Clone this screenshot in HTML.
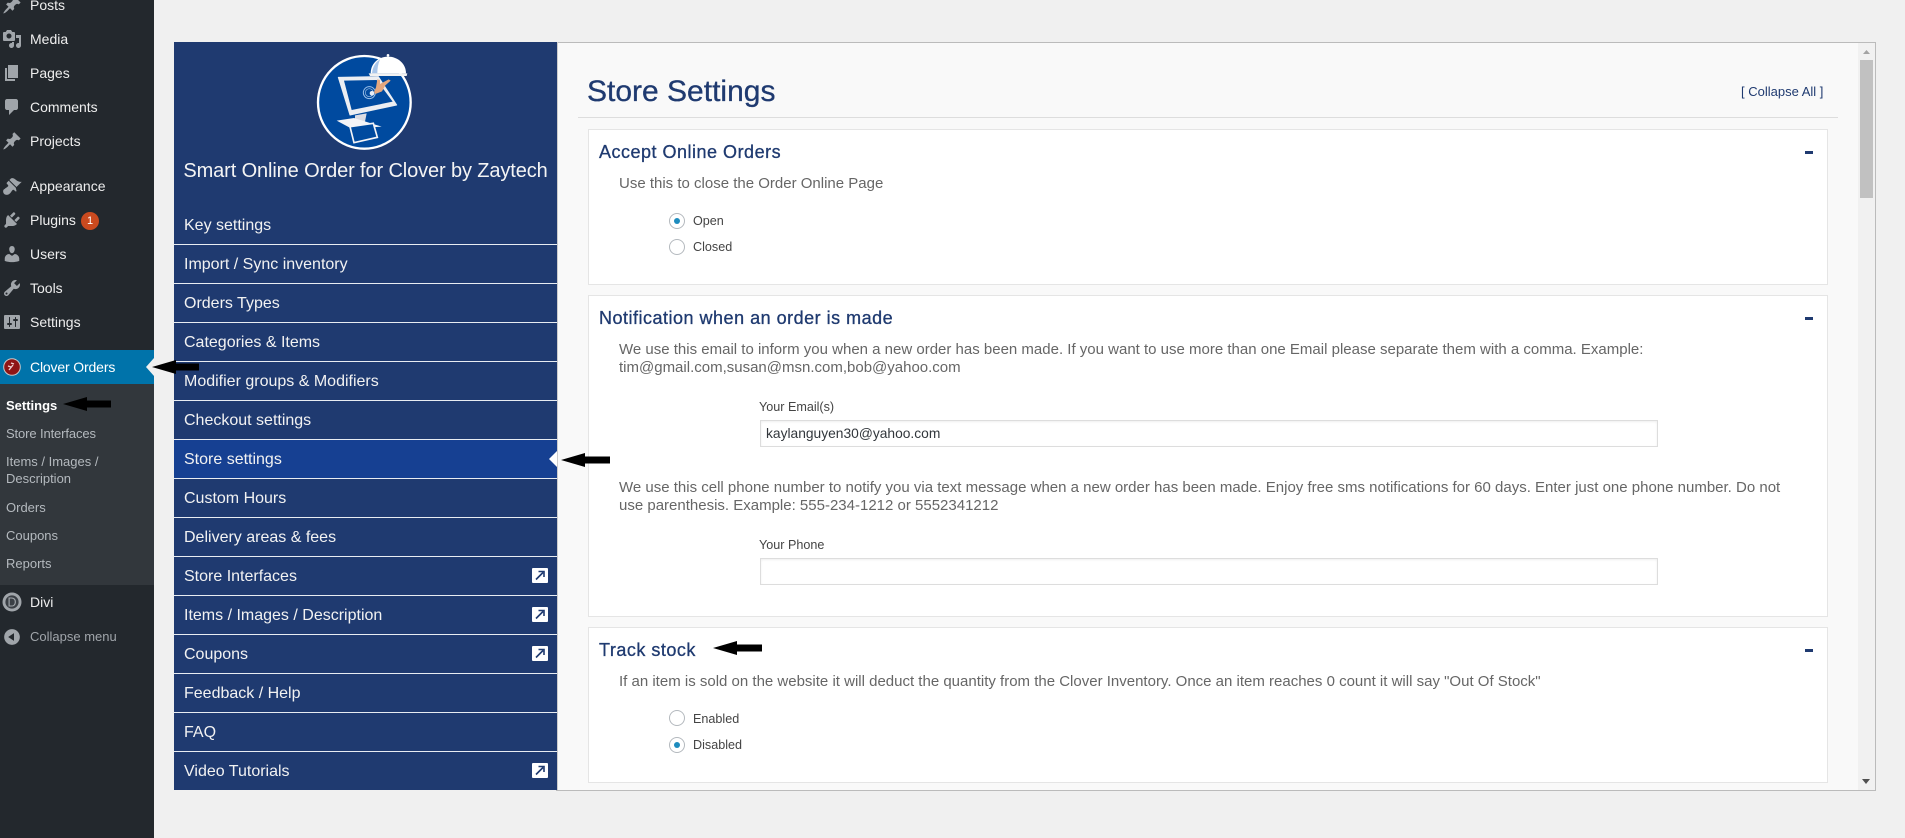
<!DOCTYPE html>
<html><head><meta charset="utf-8"><title>Store Settings</title>
<style>
*{box-sizing:border-box}
html,body{margin:0;padding:0;width:1905px;height:838px;overflow:hidden;background:#f0f0f0;font-family:"Liberation Sans",sans-serif}
.a{position:absolute;white-space:nowrap}
#side{position:absolute;left:0;top:0;width:154px;height:838px;background:#23282d}
.m{position:absolute;left:30px;color:#eee;font-size:14px;line-height:20px;white-space:nowrap}
.i{position:absolute;left:2px;width:20px;height:20px;fill:#a0a5aa}
.s{position:absolute;left:6px;color:#b4b9be;font-size:13px;line-height:18px;white-space:nowrap}
.row{position:absolute;left:174px;width:383px;height:39px;background:#1f3a70;border-bottom:1px solid #e8ecf2;color:#f2f2f2;font-size:16px;line-height:40px;padding-left:10px;white-space:nowrap}
.ext{position:absolute;left:358px;top:11px;width:16px;height:15px}
.card{position:absolute;left:588px;width:1240px;background:#fff;border:1px solid #e5e5e5}
.h{position:absolute;left:599px;color:#1f3a70;font-size:18px;letter-spacing:.5px;line-height:24px;white-space:nowrap;font-weight:400;-webkit-text-stroke:.3px #1f3a70}
.p{position:absolute;left:619px;color:#666;font-size:15px;line-height:18px;white-space:nowrap}
.l{position:absolute;color:#444;font-size:12.6px;line-height:16px;white-space:nowrap}
.dash{position:absolute;left:1805px;width:8px;height:3px;background:#1f3a70}
.r{position:absolute;left:669px;width:16px;height:16px;border:1px solid #b4b9be;border-radius:50%;background:#fff}
.r.on:after{content:"";position:absolute;left:4px;top:4px;width:6px;height:6px;border-radius:50%;background:#1e8cbe}
.inp{position:absolute;left:760px;width:898px;height:27px;background:#fff;border:1px solid #ddd;box-shadow:inset 0 1px 2px rgba(0,0,0,.07);color:#32373c;font-size:13.8px;line-height:25px;padding-left:5px;white-space:nowrap}
</style></head><body>

<div id="side">
<svg class="i" style="top:-5px" viewBox="0 0 20 20"><path d="M10.44 3.02l1.82-1.82 6.36 6.35-1.83 1.82c-1.05-.68-2.48-.57-3.41.36l-.75.75c-.92.93-1.04 2.35-.35 3.41l-1.83 1.82-2.41-2.41-2.8 2.79c-.42.42-3.38 2.71-3.8 2.29s1.86-3.39 2.28-3.81l2.79-2.79L4.1 9.36l1.83-1.82c1.05.69 2.48.57 3.4-.36l.75-.75c.93-.92 1.05-2.35.36-3.41z"/></svg>
<div class="m" style="top:-5px">Posts</div>
<svg class="i" style="top:29px" viewBox="0 0 20 20"><path d="M13 11V4c0-.55-.45-1-1-1h-1.67L9 1H5L3.67 3H2c-.55 0-1 .45-1 1v7c0 .55.45 1 1 1h10c.55 0 1-.45 1-1zM7 4.5c1.38 0 2.5 1.12 2.5 2.5S8.38 9.5 7 9.5 4.5 8.38 4.5 7 5.62 4.5 7 4.5zM14 6h5v10.5c0 1.38-1.12 2.5-2.5 2.5S14 17.88 14 16.5s1.12-2.5 2.5-2.5c.17 0 .34.02.5.05V9h-3V6zm-4 8.05V13h2v3.5c0 1.38-1.12 2.5-2.5 2.5S7 17.88 7 16.5 8.12 14 9.5 14c.17 0 .34.02.5.05z"/></svg>
<div class="m" style="top:29px">Media</div>
<svg class="i" style="top:63px" viewBox="0 0 20 20"><path d="M6 15V2h10v13H6zm-1 1h8v2H3V5h2v11z"/></svg>
<div class="m" style="top:63px">Pages</div>
<svg class="i" style="top:97px" viewBox="0 0 20 20"><path d="M5 2h9c1.1 0 2 .9 2 2v7c0 1.1-.9 2-2 2h-2l-5 5v-5H5c-1.1 0-2-.9-2-2V4c0-1.1.9-2 2-2z"/></svg>
<div class="m" style="top:97px">Comments</div>
<svg class="i" style="top:131px" viewBox="0 0 20 20"><path d="M10.44 3.02l1.82-1.82 6.36 6.35-1.83 1.82c-1.05-.68-2.48-.57-3.41.36l-.75.75c-.92.93-1.04 2.35-.35 3.41l-1.83 1.82-2.41-2.41-2.8 2.79c-.42.42-3.38 2.71-3.8 2.29s1.86-3.39 2.28-3.81l2.79-2.79L4.1 9.36l1.83-1.82c1.05.69 2.48.57 3.4-.36l.75-.75c.93-.92 1.05-2.35.36-3.41z"/></svg>
<div class="m" style="top:131px">Projects</div>
<svg class="i" style="top:176px" viewBox="0 0 20 20"><path d="M14.48 11.06L7.41 3.99l1.5-1.5c.5-.56 2.3-.47 3.51.32 1.21.8 1.43 1.28 2.91 2.1 1.18.64 2.45 1.26 4.45.85zm-.71.71L6.7 4.7 4.93 6.47c-.39.39-.39 1.02 0 1.41l1.06 1.06c.39.39.39 1.03 0 1.42-.6.6-1.43 1.11-2.21 1.69-.35.26-.7.53-1.01.84C1.43 13.23.91 14.65 1.2 16.07c.28 1.42 1.31 2.45 2.73 2.73 1.42.29 2.84-.23 4.18-1.57.31-.31.58-.66.84-1.01.58-.78 1.09-1.61 1.69-2.21.39-.39 1.03-.39 1.42 0l1.06 1.06c.39.39 1.02.39 1.41 0z"/></svg>
<div class="m" style="top:176px">Appearance</div>
<svg class="i" style="top:210px" viewBox="0 0 20 20"><path d="M13.11 4.36L9.87 7.6 8 5.73l3.24-3.24c.35-.34 1.05-.2 1.56.32.52.51.66 1.21.31 1.55zm-8 1.77l.91-1.12 9.01 9.01-1.19.84c-.71.71-2.63 1.16-3.82 1.16H6.14L4.9 17.26c-.59.59-1.54.59-2.12 0-.59-.58-.59-1.53 0-2.12l1.24-1.24v-3.88c0-1.13.4-3.19 1.09-3.89zm7.26 3.97l3.24-3.24c.34-.35 1.04-.21 1.55.31.52.51.66 1.21.31 1.55l-3.24 3.25z"/></svg>
<div class="m" style="top:210px">Plugins</div>
<div class="a" style="left:81px;top:212px;width:18px;height:18px;border-radius:50%;background:#ca4a1f;color:#fff;font-size:11px;line-height:18px;text-align:center">1</div>
<svg class="i" style="top:244px" viewBox="0 0 20 20"><path d="M10 9.25c-2.27 0-2.73-3.44-2.73-3.44C7 4.02 7.82 2 9.97 2c2.16 0 2.98 2.02 2.71 3.81 0 0-.41 3.44-2.68 3.44zm0 2.57L12.72 10c2.39 0 4.52 2.33 4.52 4.53v2.49s-3.65 1.13-7.24 1.13c-3.65 0-7.24-1.13-7.24-1.13v-2.49c0-2.25 1.94-4.48 4.47-4.48z"/></svg>
<div class="m" style="top:244px">Users</div>
<svg class="i" style="top:278px" viewBox="0 0 20 20"><path d="M16.68 9.77c-1.34 1.34-3.3 1.67-4.95.99l-5.41 6.52c-.99.99-2.59.99-3.58 0s-.99-2.59 0-3.57l6.52-5.42c-.68-1.65-.35-3.61.99-4.95 1.28-1.28 3.12-1.62 4.72-1.06l-2.89 2.89 2.82 2.82 2.86-2.87c.53 1.58.18 3.39-1.08 4.65zM3.81 16.21c.4.39 1.04.39 1.43 0 .4-.4.4-1.04 0-1.43-.39-.4-1.03-.4-1.43 0-.39.39-.39 1.03 0 1.43z"/></svg>
<div class="m" style="top:278px">Tools</div>
<svg class="i" style="top:312px" viewBox="0 0 20 20"><path d="M18 16V4c0-.55-.45-1-1-1H3c-.55 0-1 .45-1 1v12c0 .55.45 1 1 1h14c.55 0 1-.45 1-1zM8 11h1c.55 0 1 .45 1 1s-.45 1-1 1H8v1.5c0 .28-.22.5-.5.5s-.5-.22-.5-.5V13H6c-.55 0-1-.45-1-1s.45-1 1-1h1V5.5c0-.28.22-.5.5-.5s.5.22.5.5V11zm5-2h-1c-.55 0-1-.45-1-1s.45-1 1-1h1V5.5c0-.28.22-.5.5-.5s.5.22.5.5V7h1c.55 0 1 .45 1 1s-.45 1-1 1h-1v5.5c0 .28-.22.5-.5.5s-.5-.22-.5-.5V9z"/></svg>
<div class="m" style="top:312px">Settings</div>

<div class="a" style="left:0;top:350px;width:154px;height:34px;background:#0073aa"></div>
<svg class="a" style="left:3px;top:358px;width:18px;height:18px" viewBox="0 0 18 18"><circle cx="9" cy="9" r="8.3" fill="#8e1515" stroke="#c9c9c9" stroke-width="1"/><path d="M6 12l4-5M8 5l3 1M5 8l3 1" stroke="#f0d0d0" stroke-width="1.3" fill="none"/></svg>
<div class="m" style="top:357px;color:#fff;letter-spacing:-.15px">Clover Orders</div>
<svg class="a" style="left:146px;top:358px;width:8px;height:18px" viewBox="0 0 8 18"><path d="M8 0L0 9l8 9z" fill="#f0f0f0"/></svg>

<div class="a" style="left:0;top:384px;width:154px;height:201px;background:#32373c"></div>
<div class="s" style="top:397px;color:#fff;font-weight:700">Settings</div>
<div class="s" style="top:425px;letter-spacing:-.12px">Store Interfaces</div>
<div class="s" style="top:453px">Items / Images /</div>
<div class="s" style="top:470px">Description</div>
<div class="s" style="top:499px">Orders</div>
<div class="s" style="top:527px">Coupons</div>
<div class="s" style="top:555px">Reports</div>

<svg class="a" style="left:2px;top:592px;width:20px;height:20px" viewBox="0 0 20 20"><circle cx="10" cy="10" r="9.5" fill="#a0a5aa"/><circle cx="10" cy="10" r="6.6" fill="#3a3f45"/><text x="10" y="14.4" text-anchor="middle" font-family="Liberation Sans" font-size="12.5" fill="#a0a5aa">D</text></svg>
<div class="m" style="top:592px">Divi</div>
<svg class="i" style="top:627px" viewBox="0 0 20 20"><path d="M10 2.16c4.33 0 7.84 3.51 7.84 7.84s-3.51 7.84-7.84 7.84S2.16 14.33 2.16 10 5.71 2.16 10 2.16zm2 11.72V6.12L6.18 9.97z"/></svg>
<div class="m" style="top:627px;color:#a0a5aa;font-size:13px">Collapse menu</div>
</div>

<!-- panel -->
<div class="a" style="left:556px;top:42px;width:1320px;height:749px;background:#f9f9f9;border:1px solid #bbb;border-left:none"></div>
<div class="a" style="left:557px;top:42px;width:1px;height:748px;background:#ccc"></div>
<div class="a" style="left:1858px;top:43px;width:17px;height:747px;background:#f1f1f1"></div>
<div class="a" style="left:1860px;top:60px;width:13px;height:138px;background:#c1c1c1"></div>
<svg class="a" style="left:1862px;top:49px;width:9px;height:6px" viewBox="0 0 9 6"><path d="M4.5 1L8 5H1z" fill="#a3a3a3"/></svg>
<svg class="a" style="left:1862px;top:778px;width:9px;height:6px" viewBox="0 0 9 6"><path d="M0 1h8L4 6z" fill="#505050"/></svg>

<!-- left nav -->
<div class="a" style="left:174px;top:42px;width:383px;height:164px;background:#1f3a70"></div>
<svg class="a" style="left:300px;top:40px;width:130px;height:120px" viewBox="0 0 390 360">
<circle cx="193" cy="187" r="139" fill="#004a9f" stroke="#fff" stroke-width="7"/>
<path d="M115 112L235 110 290 195 150 225z" fill="#eceef2" stroke="#eceef2" stroke-width="3" stroke-linejoin="round"/>
<path d="M132 122L230 120 278 185 155 210z" fill="#004a9f"/>
<path d="M165 226L200 220 195 245 165 250z" fill="#dcdce2"/>
<path d="M110 242L162 234 245 260 155 266z" fill="#f4f4f7"/>
<path d="M150 260L220 250 232 292 162 308z" fill="#004a9f" stroke="#f4f4f7" stroke-width="5"/>
<circle cx="208" cy="158" r="18" fill="none" stroke="#9cc0e8" stroke-width="3"/>
<circle cx="208" cy="158" r="12" fill="none" stroke="#9cc0e8" stroke-width="2"/>
<circle cx="216" cy="160" r="7" fill="#e8eef7"/>
<path d="M222 156l6-14 4-24 8 2 0 12 26-14 6 4-16 14-10 18-20 8z" fill="#e3a77f"/>
<path d="M212 100c0-30 24-50 52-50s54 20 54 50z" fill="#fff"/>
<path d="M216 100c2-22 12-34 24-42-6 14-8 28-8 42z" fill="#a9c6ea"/>
<circle cx="264" cy="46" r="4" fill="#fff"/>
<path d="M206 100h116l-2 8H210z" fill="#f2f2f2"/>
</svg>
<div class="a" style="left:174px;top:157px;width:383px;text-align:center;color:#f4f4f4;font-size:20px;letter-spacing:-.12px;line-height:28px">Smart Online Order for Clover by Zaytech</div>

<div class="row" style="top:206px">Key settings</div>
<div class="row" style="top:245px">Import / Sync inventory</div>
<div class="row" style="top:284px">Orders Types</div>
<div class="row" style="top:323px">Categories &amp; Items</div>
<div class="row" style="top:362px">Modifier groups &amp; Modifiers</div>
<div class="row" style="top:401px">Checkout settings</div>
<div class="row" style="top:440px;background:#164092">Store settings<svg class="a" style="left:375px;top:11px;width:8px;height:16px" viewBox="0 0 8 16"><path d="M8 0L0 8l8 8z" fill="#fff"/></svg></div>
<div class="row" style="top:479px">Custom Hours</div>
<div class="row" style="top:518px">Delivery areas &amp; fees</div>
<div class="row" style="top:557px">Store Interfaces<svg class="ext" viewBox="0 0 16 15"><rect width="16" height="15" rx="1" fill="#fff"/><path d="M4 11.500L11 4.500M6.500 3.500h5.500v5.500" fill="none" stroke="#1f3a70" stroke-width="1.6"/></svg></div>
<div class="row" style="top:596px">Items / Images / Description<svg class="ext" viewBox="0 0 16 15"><rect width="16" height="15" rx="1" fill="#fff"/><path d="M4 11.500L11 4.500M6.500 3.500h5.500v5.500" fill="none" stroke="#1f3a70" stroke-width="1.6"/></svg></div>
<div class="row" style="top:635px">Coupons<svg class="ext" viewBox="0 0 16 15"><rect width="16" height="15" rx="1" fill="#fff"/><path d="M4 11.500L11 4.500M6.500 3.500h5.500v5.500" fill="none" stroke="#1f3a70" stroke-width="1.6"/></svg></div>
<div class="row" style="top:674px">Feedback / Help</div>
<div class="row" style="top:713px">FAQ</div>
<div class="row" style="top:752px;height:38px;border-bottom:none">Video Tutorials<svg class="ext" viewBox="0 0 16 15"><rect width="16" height="15" rx="1" fill="#fff"/><path d="M4 11.500L11 4.500M6.500 3.500h5.500v5.500" fill="none" stroke="#1f3a70" stroke-width="1.6"/></svg></div>

<!-- content -->
<div class="a" style="left:587px;top:72px;color:#1f3a70;font-size:30px;line-height:40px;-webkit-text-stroke:.3px #1f3a70">Store Settings</div>
<div class="a" style="left:1741px;top:84px;color:#1f3a70;font-size:13px;line-height:16px">[ Collapse All ]</div>
<div class="a" style="left:578px;top:117px;width:1260px;height:1px;background:#ddd"></div>

<div class="card" style="top:129px;height:156px"></div>
<div class="h" style="top:140px">Accept Online Orders</div>
<div class="dash" style="top:151px"></div>
<div class="p" style="top:175px">Use this to close the Order Online Page</div>
<div class="r on" style="top:213px"></div><div class="l" style="left:693px;top:213px">Open</div>
<div class="r" style="top:239px"></div><div class="l" style="left:693px;top:239px">Closed</div>

<div class="card" style="top:295px;height:322px"></div>
<div class="h" style="top:306px">Notification when an order is made</div>
<div class="dash" style="top:317px"></div>
<div class="p" style="top:341px">We use this email to inform you when a new order has been made. If you want to use more than one Email please separate them with a comma. Example:</div>
<div class="p" style="top:359px">tim@gmail.com,susan@msn.com,bob@yahoo.com</div>
<div class="l" style="left:759px;top:399px">Your Email(s)</div>
<div class="inp" style="top:420px">kaylanguyen30@yahoo.com</div>
<div class="p" style="top:479px">We use this cell phone number to notify you via text message when a new order has been made. Enjoy free sms notifications for 60 days. Enter just one phone number. Do not</div>
<div class="p" style="top:497px">use parenthesis. Example: 555-234-1212 or 5552341212</div>
<div class="l" style="left:759px;top:537px">Your Phone</div>
<div class="inp" style="top:558px"></div>

<div class="card" style="top:627px;height:156px"></div>
<div class="h" style="top:638px">Track stock</div>
<div class="dash" style="top:649px"></div>
<div class="p" style="top:673px">If an item is sold on the website it will deduct the quantity from the Clover Inventory. Once an item reaches 0 count it will say "Out Of Stock"</div>
<div class="r" style="top:710px"></div><div class="l" style="left:693px;top:711px">Enabled</div>
<div class="r on" style="top:737px"></div><div class="l" style="left:693px;top:737px">Disabled</div>

<!-- annotation arrows -->
<svg class="a" style="left:0;top:0;width:1905px;height:838px" viewBox="0 0 1905 838">
<path d="M152 367l24-7v3.500h23v7h-23v3.500z" fill="#000"/>
<path d="M63 404l24-7v3.500h24v7H87v3.500z" fill="#000"/>
<path d="M561 460l24-7v3.500h25v7h-25v3.500z" fill="#000"/>
<path d="M713 648l24-7v3.500h25v7h-25v3.500z" fill="#000"/>
</svg>
</body></html>
